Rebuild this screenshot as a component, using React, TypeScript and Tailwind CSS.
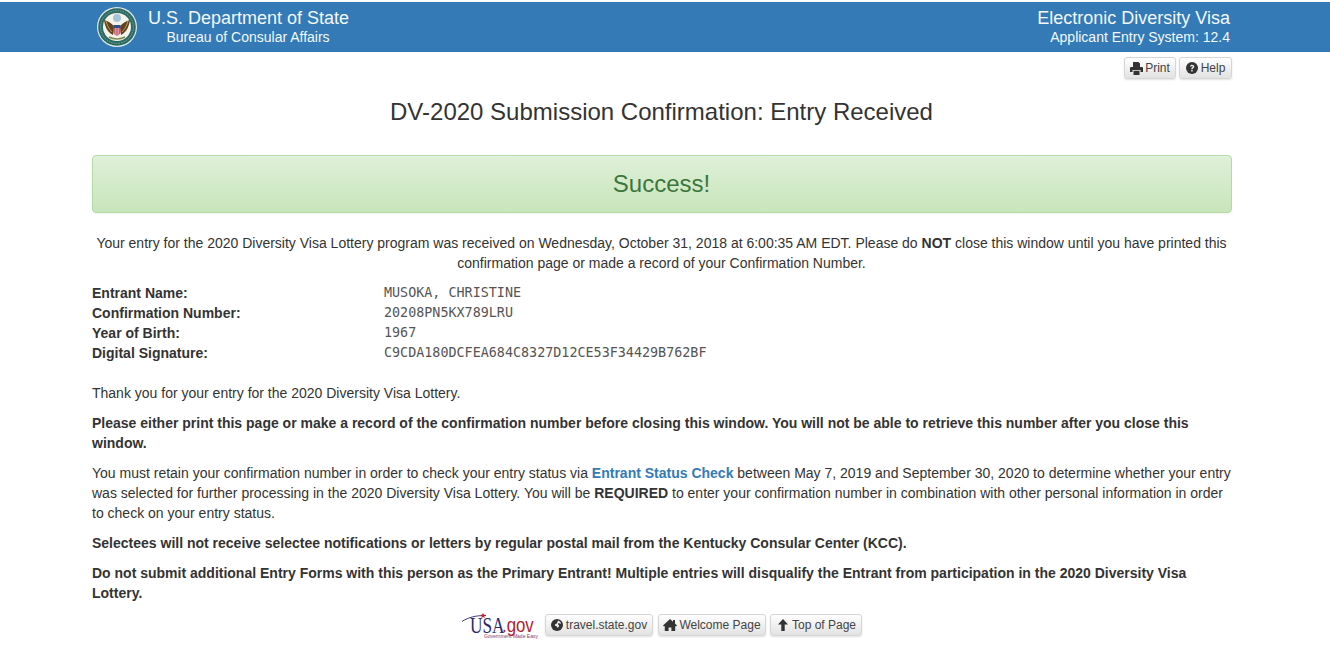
function Seal() {
    return (
        <svg width="40" height="40" viewBox="0 0 40 40" className="shrink-0">
            <circle cx="20" cy="20" r="20" fill="#dfe9e6" />
            <circle cx="20" cy="20" r="18.800" fill="#2a6a62" />
            <circle cx="20" cy="20" r="14" fill="#f4f3ea" />
            <circle cx="20" cy="20" r="16.400" fill="none" stroke="#9dbcb2" strokeWidth="0.7" strokeDasharray="1.500 1" />
            <circle cx="20" cy="11" r="4" fill="#a6c4d4" />
            <path d="M7 13c1 6 3 12 9 15l1-8c-2-4-6-6-10-7zM33 13c-1 6-3 12-9 15l-1-8c2-4 6-6 10-7z" fill="#5f4220" />
            <path d="M9 14c1 4 3 8 6 11M31 14c-1 4-3 8-6 11" stroke="#c9a860" strokeWidth="0.9" fill="none" />
            <path d="M16.500 18h7v7c0 2-1.500 3.200-3.500 4-2-.8-3.500-2-3.500-4z" fill="#b8384a" />
            <path d="M16.500 18h7v3h-7z" fill="#2f4f8a" />
            <path d="M18.200 21v7M20 21v8M21.800 21v7" stroke="#f5f5f5" strokeWidth="0.7" />
            <path d="M12 30c4 2.500 12 2.500 16 0" stroke="#7e8a55" strokeWidth="1.500" fill="none" />
        </svg>
    );
}

function UsaGov() {
    return (
        <div className="relative w-[79px] h-[24px] shrink-0">
            <svg width="32" height="14" viewBox="0 0 32 14" className="absolute left-0 top-0">
                <path d="M0 8.500C7 4 14 2.500 24 2.500" stroke="#2b2a6e" strokeWidth="0.9" fill="none" />
                <path d="M21 0l.8 1.600 1.800.3-1.300 1.200.3 1.800-1.600-.8-1.600.8.3-1.800-1.300-1.200 1.800-.3z" fill="#c8202c" />
            </svg>
            <span className="absolute left-[8px] top-[2px] origin-left scale-x-[0.72] text-[24px] leading-[20px] text-[#2b2a6e] font-['Liberation_Serif',serif]">
                USA
            </span>
            <span className="absolute left-[40px] top-[2px] origin-left scale-x-[0.8] text-[21px] leading-[20px] text-[#b5202a]">
                .gov
            </span>
            <span className="absolute left-[22px] top-[21px] text-[5px] leading-[5px] text-[#8a3a5a] whitespace-nowrap">
                Government Made Easy
            </span>
        </div>
    );
}

function PrintIcon() {
    return (
        <svg width="13" height="13" viewBox="0 0 13 13" className="shrink-0 fill-[#333]">
            <path d="M3 0h5.500L10 1.500V5H3zM1 5h11a1 1 0 0 1 1 1v4h-2.500V8h-8v2H0V6a1 1 0 0 1 1-1zM3.500 8.800h6V13h-6z" />
        </svg>
    );
}

function HelpIcon() {
    return (
        <svg width="12" height="12" viewBox="0 0 12 12" className="shrink-0 mr-[1px]">
            <circle cx="6" cy="6" r="6" fill="#333" />
            <path d="M3.900 4.600C4 3.300 5 2.700 6.100 2.700c1.300 0 2.200.8 2.200 1.800 0 1.600-1.600 1.500-1.600 2.700H5.200c0-1.900 1.500-1.800 1.500-2.700 0-.4-.2-.6-.6-.6-.5 0-.7.3-.8.7zM5.200 8h1.500v1.400H5.200z" fill="#e8e8e8" />
        </svg>
    );
}

function GlobeIcon() {
    return (
        <svg width="12" height="12" viewBox="0 0 12 12" className="shrink-0 mr-[1px]">
            <circle cx="6" cy="6" r="6" fill="#333" />
            <path d="M7 1.500c1.500.4 2.800 1.600 3 3.200-.8.200-1.500 0-2-.6-.8.200-1.200.9-.7 1.600.7.300 1 1 .6 1.700L6.800 9 5.900 7.500 4.200 6.800 4 5.200l1.500-.4L6.300 3.400z" fill="#ececec" />
        </svg>
    );
}

function HomeIcon() {
    return (
        <svg width="14" height="12" viewBox="0 0 14 12" className="shrink-0 fill-[#333]">
            <path d="M7 0l3 2.700V1h2v3.500L14 6.400l-.6.8h-1.200V12H8.400V8.400H5.600V12H1.800V7.200H.6L0 6.400z" />
        </svg>
    );
}

function UpIcon() {
    return (
        <svg width="14" height="12" viewBox="0 0 14 12" className="shrink-0 fill-[#333]">
            <path d="M7 0l5 5.500H8.700V12H5.300V5.500H2z" />
        </svg>
    );
}

function Btn({ icon, label, cls }: { icon: React.ReactNode; label: string; cls: string }) {
    return (
        <span className={`inline-flex items-center justify-center gap-[2px] h-[22px] text-[12px] leading-[18px] text-[#444] border border-[#d6d6d6] rounded-[3px] bg-gradient-to-b from-white to-[#e2e2e2] shadow-[0_1px_2px_rgba(0,0,0,0.12)] ${cls}`}>
            {icon}
            {label}
        </span>
    );
}

export default function App() {
    return (
        <div className="min-h-[646px] bg-white text-[14px] leading-[20px] text-[#333] font-['Liberation_Sans',Arial,sans-serif]">
            <header className="mt-[2px] h-[50px] bg-[#337ab7] text-[#f2f8fc] pt-[5px]">
                <div className="flex justify-between w-[1140px] ml-[92px] pl-[5px] pr-[2px]">
                    <div className="flex gap-[11px]">
                        <Seal />
                        <div className="text-center mt-[1px]">
                            <div className="text-[18px] leading-[20px]">U.S. Department of State</div>
                            <div className="text-[14px] leading-[20px] -mt-[1px] pr-[1px]">Bureau of Consular Affairs</div>
                        </div>
                    </div>
                    <div className="text-right mt-[1px]">
                        <div className="text-[18px] leading-[20px]">Electronic Diversity Visa</div>
                        <div className="text-[14px] leading-[20px] -mt-[1px]">Applicant Entry System: 12.4</div>
                    </div>
                </div>
            </header>

            <main className="w-[1140px] ml-[92px]">
                <div className="flex justify-end gap-[3px] pt-[5px]">
                    <Btn icon={<PrintIcon />} label="Print" cls="w-[52px]" />
                    <Btn icon={<HelpIcon />} label="Help" cls="w-[53px]" />
                </div>
                <h1 className="mt-[20px] pr-[1px] text-center text-[24px] leading-[26px] font-normal">
                    DV-2020 Submission Confirmation: Entry Received
                </h1>
                <div className="mt-[30px] h-[58px] flex items-center justify-center pr-[1px] text-[24px] text-[#3c763d] rounded-[4px] border border-[#b2dba1] bg-gradient-to-b from-[#dff0d8] to-[#c8e5bc] shadow-[inset_0_1px_0_rgba(255,255,255,0.25),0_1px_2px_rgba(0,0,0,0.05)]">
                    Success!
                </div>
                <p className="mt-[20px] pr-[1px] text-center">
                    Your entry for the 2020 Diversity Visa Lottery program was received on Wednesday, October 31, 2018 at 6:00:35 AM EDT. Please do <b>NOT</b> close this window until you have printed this confirmation page or made a record of your Confirmation Number.
                </p>

                <dl className="mt-[10px] grid grid-cols-[292px_1fr]">
                    {[
                        ["Entrant Name:", "MUSOKA, CHRISTINE"],
                        ["Confirmation Number:", "20208PN5KX789LRU"],
                        ["Year of Birth:", "1967"],
                        ["Digital Signature:", "C9CDA180DCFEA684C8327D12CE53F34429B762BF"],
                    ].map(([k, v]) => (
                        <div key={k} className="contents">
                            <dt className="font-bold">{k}</dt>
                            <dd className="font-['DejaVu_Sans_Mono',monospace] text-[13.400px] text-[#555]">{v}</dd>
                        </div>
                    ))}
                </dl>

                <p className="mt-[20px]">Thank you for your entry for the 2020 Diversity Visa Lottery.</p>
                <p className="mt-[10px] font-bold">
                    Please either print this page or make a record of the confirmation number before closing this window. You will not be able to retrieve this number after you close this window.
                </p>
                <p className="mt-[10px]">
                    You must retain your confirmation number in order to check your entry status via <a className="font-bold text-[#337ab7]">Entrant Status Check</a> between May 7, 2019 and September 30, 2020 to determine whether your entry was selected for further processing in the 2020 Diversity Visa Lottery. You will be <b>REQUIRED</b> to enter your confirmation number in combination with other personal information in order to check on your entry status.
                </p>
                <p className="mt-[10px] font-bold">
                    Selectees will not receive selectee notifications or letters by regular postal mail from the Kentucky Consular Center (KCC).
                </p>
                <p className="mt-[10px] font-bold">
                    Do not submit additional Entry Forms with this person as the Primary Entrant! Multiple entries will disqualify the Entrant from participation in the 2020 Diversity Visa Lottery.
                </p>

                <div className="mt-[10px] flex items-center pl-[370px]">
                    <UsaGov />
                    <Btn icon={<GlobeIcon />} label="travel.state.gov" cls="w-[108px] ml-[4px]" />
                    <Btn icon={<HomeIcon />} label="Welcome Page" cls="w-[108px] ml-[5px]" />
                    <Btn icon={<UpIcon />} label="Top of Page" cls="w-[92px] ml-[4px]" />
                </div>
            </main>
        </div>
    );
}
